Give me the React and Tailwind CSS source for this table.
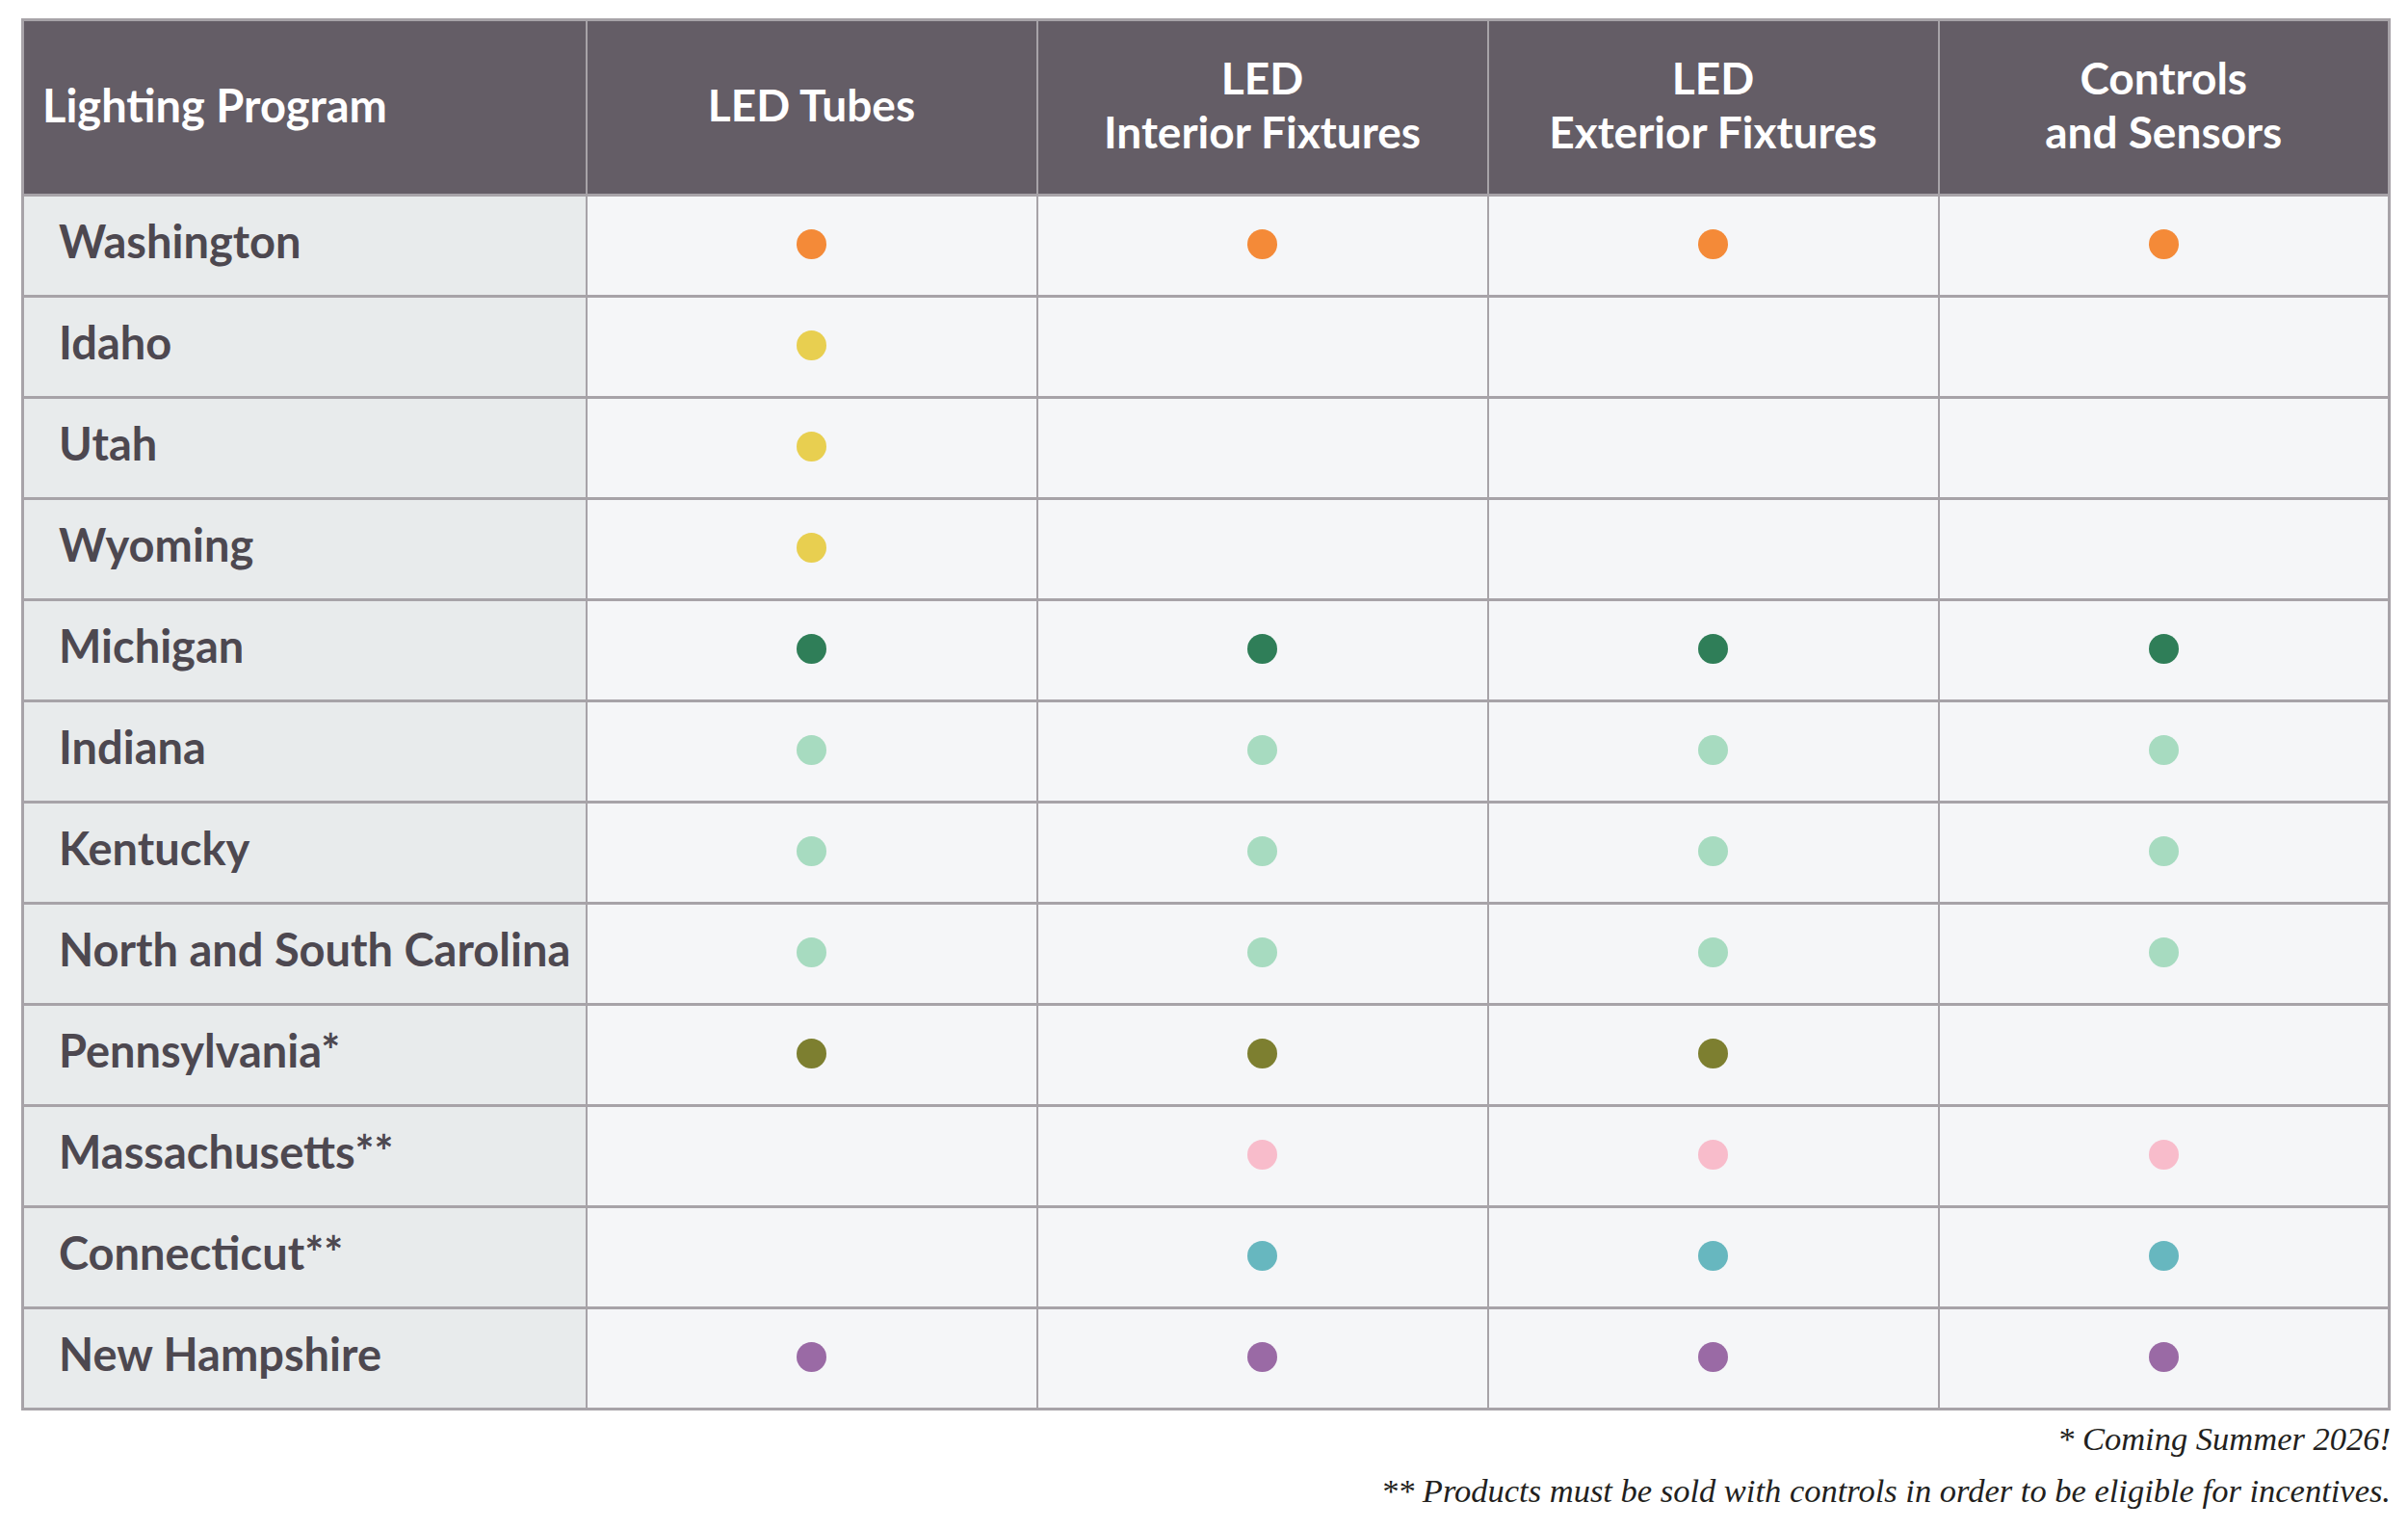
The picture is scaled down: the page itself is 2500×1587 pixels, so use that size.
import React from 'react';

const C = {
    orange: 'bg-[#f48a38]',
    yellow: 'bg-[#e8cf50]',
    green: 'bg-[#2f7e58]',
    mint: 'bg-[#a7dbc0]',
    olive: 'bg-[#7d7f30]',
    pink: 'bg-[#f8bccb]',
    teal: 'bg-[#67b7bf]',
    purple: 'bg-[#9a6aa5]',
};

const rows = [
    { name: 'Washington', dots: ['orange', 'orange', 'orange', 'orange'] },
    { name: 'Idaho', dots: ['yellow', null, null, null] },
    { name: 'Utah', dots: ['yellow', null, null, null] },
    { name: 'Wyoming', dots: ['yellow', null, null, null] },
    { name: 'Michigan', dots: ['green', 'green', 'green', 'green'] },
    { name: 'Indiana', dots: ['mint', 'mint', 'mint', 'mint'] },
    { name: 'Kentucky', dots: ['mint', 'mint', 'mint', 'mint'] },
    { name: 'North and South Carolina', dots: ['mint', 'mint', 'mint', 'mint'] },
    { name: 'Pennsylvania*', dots: ['olive', 'olive', 'olive', null] },
    { name: 'Massachusetts**', dots: [null, 'pink', 'pink', 'pink'] },
    { name: 'Connecticut**', dots: [null, 'teal', 'teal', 'teal'] },
    { name: 'New Hampshire', dots: ['purple', 'purple', 'purple', 'purple'] },
];

const headers = [
    ['LED Tubes'],
    ['LED', 'Interior Fixtures'],
    ['LED', 'Exterior Fixtures'],
    ['Controls', 'and Sensors'],
];

export default function App() {
    return (
        <div className="min-h-screen bg-white pl-[22px] pt-[19px]" style={{ fontFamily: 'Lato, "Open Sans", sans-serif' }}>
            <div className="w-[2460px]">
                <table className="w-full table-fixed border-collapse border-[3px] border-[#a7a3a8]">
                    <colgroup>
                        <col className="w-[585px]" />
                        <col />
                        <col />
                        <col />
                        <col />
                    </colgroup>
                    <thead>
                        <tr className="h-[182px] bg-[#645d66] text-white">
                            <th className="border-x-2 border-[#a7a3a8] pl-[19px] pb-[6px] text-left text-[47px] font-bold leading-[56px]">
                                Lighting Program
                            </th>
                            {headers.map((lines, i) => (
                                <th key={i} className="border-x-2 border-[#a7a3a8] pb-[6px] text-center text-[46px] font-bold leading-[56px]">
                                    {lines.map((l, j) => <div key={j}>{l}</div>)}
                                </th>
                            ))}
                        </tr>
                    </thead>
                    <tbody>
                        {rows.map((row) => (
                            <tr key={row.name} className="h-[105px] border-y-[3px] border-[#a7a3a8]">
                                <td className="border-[2px] border-[#a7a3a8] bg-[#e8ebec] pl-[36px] pb-[9px] text-[47px] font-bold text-[#4d4850] whitespace-nowrap">
                                    {row.name}
                                </td>
                                {row.dots.map((d, i) => (
                                    <td key={i} className="border-[2px] border-[#a7a3a8] bg-[#f5f6f8] pb-[3px]">
                                        {d && <div className={`mx-auto h-[31px] w-[31px] rounded-full ${C[d]}`} />}
                                    </td>
                                ))}
                            </tr>
                        ))}
                    </tbody>
                </table>

                {/* footnotes */}
                <div className="mt-[2px] text-right italic text-[#231f20] text-[34.5px] leading-[54px]" style={{ fontFamily: '"Liberation Serif", serif' }}>
                    <p>* Coming Summer 2026!</p>
                    <p>** Products must be sold with controls in order to be eligible for incentives.</p>
                </div>
            </div>
        </div>
    );
}
